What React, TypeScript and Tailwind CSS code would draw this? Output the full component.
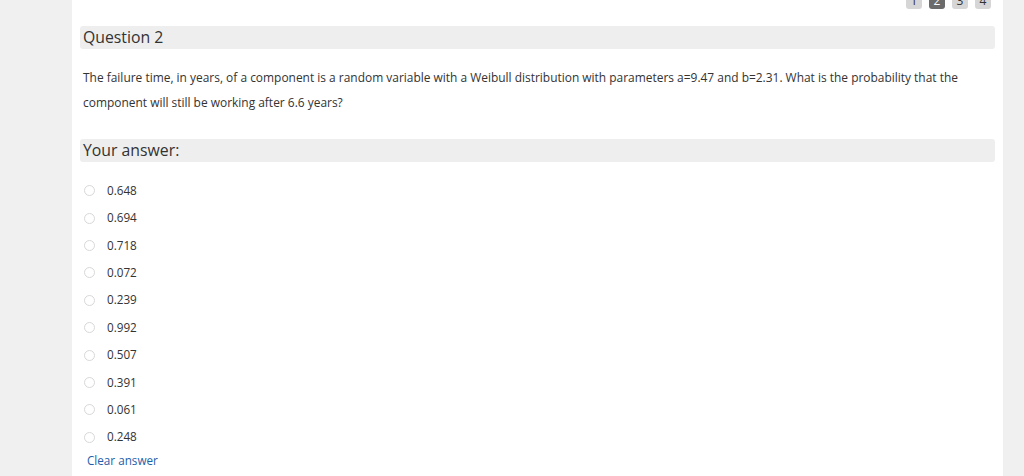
import React from "react";

const options = ["0.648", "0.694", "0.718", "0.072", "0.239", "0.992", "0.507", "0.391", "0.061", "0.248"];

export default function App() {
  return (
    <div
      className="w-[1024px] h-[476px] bg-[#f0f0f0] flex overflow-hidden"
      style={{ fontFamily: '"Open Sans", sans-serif' }}
    >
      <div className="ml-[72px] w-[931px] h-full bg-white flex flex-col px-[8px]">
        <div className="flex justify-end gap-[7px] pr-[4px] mt-[-9px] h-[18px]">
          {["1", "2", "3", "4"].map((n) => (
            <div
              key={n}
              className={`w-[16px] h-[18px] rounded-[3px] flex items-end justify-center text-[12px] leading-[16px] ${
                n === "2" ? "bg-[#6b6b6b] text-white" : "bg-[#d6d6d6] text-[#333]"
              }`}
            >
              {n}
            </div>
          ))}
        </div>
        <div className="mt-[17px] h-[23px] bg-[#eeeeee] rounded-[3px] flex items-center pl-[3px] text-[15.8px] text-[#333]">
          Question 2
        </div>
        <div className="mt-[16px] pl-[3px] text-[11.95px] leading-[25px] text-[#333]">
          The failure time, in years, of a component is a random variable with a Weibull distribution with parameters a=9.47 and b=2.31. What is the probability that the component will still be working after 6.6 years?
        </div>
        <div className="mt-[24px] h-[23px] bg-[#eeeeee] rounded-[3px] flex items-center pl-[3px] text-[15.8px] text-[#333]">
          Your answer:
        </div>
        <div className="mt-[15px] flex flex-col pl-[4px]">
          {options.map((o) => (
            <div key={o} className="h-[27.4px] flex items-center gap-[12px]">
              <span className="w-[11px] h-[11px] rounded-full border border-[#d8d8d8] bg-white"></span>
              <span className="text-[11.7px] text-[#333]">{o}</span>
            </div>
          ))}
        </div>
        <div className="mt-[2px] pl-[7px] text-[11.7px] leading-[14px] text-[#1f5ea8]">Clear answer</div>
      </div>
    </div>
  );
}
